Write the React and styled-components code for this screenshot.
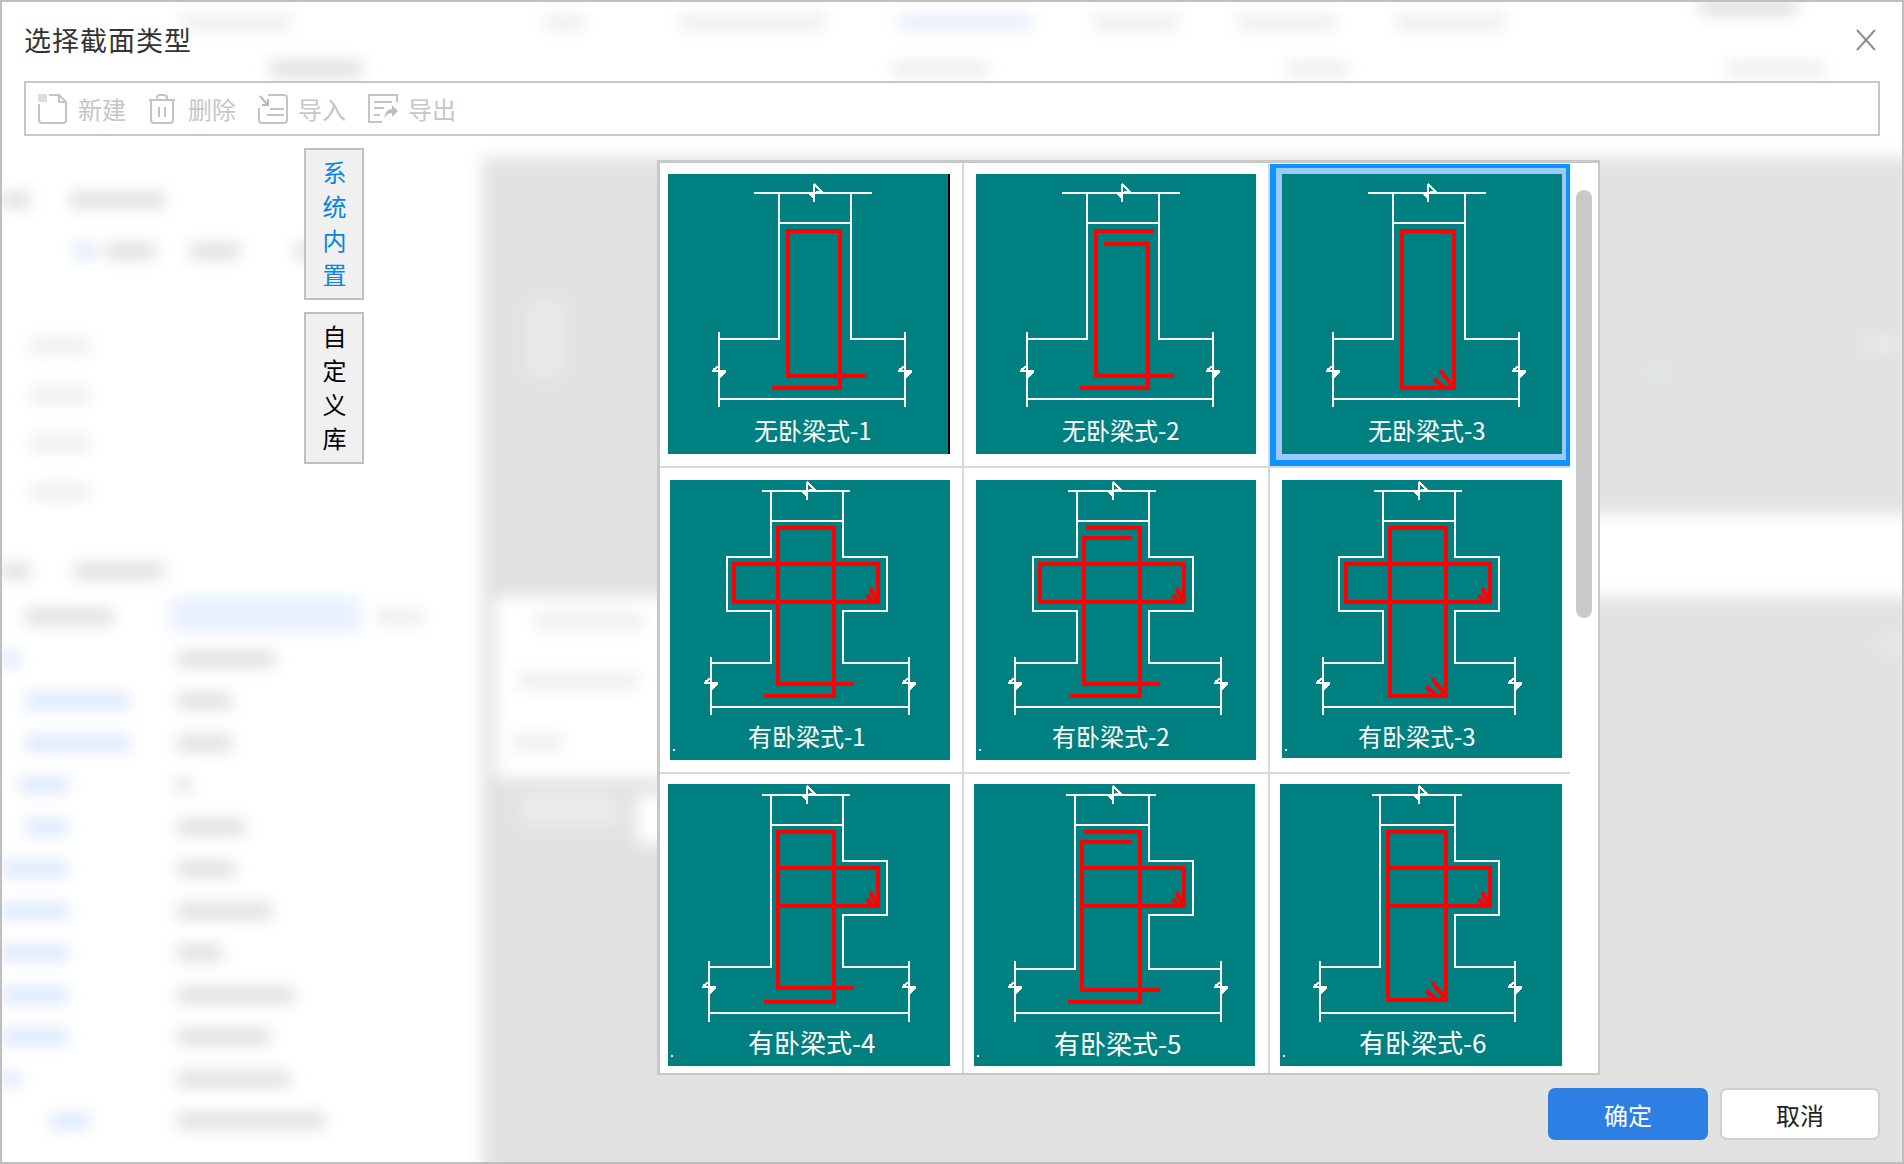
import React from "react";
import styled, { createGlobalStyle } from "styled-components";

const GlobalStyle = createGlobalStyle`
  html, body {
    margin: 0;
    padding: 0;
    overflow: hidden;
    background: #fff;
    font-family: "Noto Sans CJK SC", "Liberation Sans", sans-serif;
  }
`;

const Screen = styled.div`
  position: relative;
  width: 1904px;
  height: 1164px;
  overflow: hidden;
`;

/* the page behind the dialog, out of focus */
const Backdrop = styled.div`
  position: absolute;
  top: 0;
  left: 0;
  width: 1944px;
  height: 1204px;
  background: #fff;
  filter: blur(8px);
  display: grid;
  grid-template-columns: 482px 1fr;
  grid-template-rows: 157px 1fr;
`;

const TopBand = styled.div`
  grid-column: 1 / 3;
  background: #fff;
`;

const LeftPane = styled.div`
  background: #fff;
`;

const GrayPane = styled.div`
  background: #e2e2e2;
`;

const BlurRow = styled.div`
  display: flex;
  align-items: flex-start;
  height: ${(p) => p.$h}px;
  padding-top: ${(p) => p.$pt || 0}px;
  box-sizing: border-box;
`;

const Smudge = styled.div`
  flex: none;
  width: ${(p) => p.$w}px;
  height: ${(p) => p.$bh || 14}px;
  margin-left: ${(p) => p.$ml || 0}px;
  margin-top: ${(p) => p.$mt || 0}px;
  background: ${(p) => p.$c || "#dcdcdc"};
`;

const WhiteBand = styled.div`
  flex: 1;
  height: 100%;
  margin-left: 700px;
  background: #fff;
`;

const BackCard = styled.div`
  width: 600px;
  height: 100%;
  margin-left: 13px;
  background: #fff;
  box-sizing: border-box;
  padding-top: 17px;
`;

const Dialog = styled.div`
  position: relative;
  box-sizing: border-box;
  width: 1904px;
  height: 1164px;
  border: 2px solid #bfbfbf;
  display: flex;
  flex-direction: column;
`;

const Header = styled.div`
  flex: none;
  height: 79px;
  box-sizing: border-box;
  padding: 0 26px 0 22px;
  display: flex;
  justify-content: space-between;
  align-items: center;
`;

const Title = styled.div`
  font-size: 27px;
  line-height: 36px;
  margin-top: -3px;
  color: #333;
  width: 170px;
  letter-spacing: 1px;
  white-space: nowrap;
`;

const CloseIcon = styled.svg`
  display: block;
  width: 20px;
  height: 22px;
  margin-top: -3px;
`;

const Toolbar = styled.div`
  flex: none;
  height: 55px;
  width: 1856px;
  margin-left: 22px;
  box-sizing: border-box;
  border: 2px solid #c5c7cb;
  background: #fff;
  padding-left: 12px;
  display: flex;
  align-items: center;
`;

const ToolButton = styled.div`
  width: 110px;
  display: flex;
  align-items: center;
  gap: 10px;
  font-size: 24px;
  line-height: 30px;
  color: #c6c6c6;
  white-space: nowrap;
`;

const ToolIcon = styled.svg`
  display: block;
  flex: none;
  width: 30px;
  height: 30px;
  fill: none;
  stroke: #c4c4c4;
  stroke-width: 2;
`;

const Body = styled.div`
  flex: none;
  height: 927px;
  margin-top: 12px;
  display: flex;
  align-items: flex-start;
`;

const TabColumn = styled.div`
  flex: none;
  margin-left: 302px;
  display: flex;
  flex-direction: column;
  gap: 12px;
`;

const Tab = styled.div`
  width: 60px;
  height: 152px;
  box-sizing: border-box;
  border: 2px solid #c0c0c0;
  background: #f0f0f0;
  padding-top: 11px;
  display: flex;
  align-items: center;
  writing-mode: vertical-rl;
  text-orientation: upright;
  font-size: 24px;
  line-height: 24px;
  letter-spacing: 10px;
  color: ${(p) => (p.$active ? "#0a84e0" : "#000")};
`;

const Panel = styled.div`
  flex: none;
  width: 943px;
  height: 915px;
  margin: 12px 0 0 293px;
  box-sizing: border-box;
  border: 3px solid #c8c8c8;
  border-right-width: 2px;
  border-bottom-width: 2px;
  background: #fff;
  display: flex;
  overflow: hidden;
`;

const Grid = styled.div`
  flex: none;
  display: grid;
  grid-template-columns: 304px 306px 300px;
  grid-template-rows: 305px 306px 299px;
`;

const Cell = styled.div`
  box-sizing: border-box;
  padding: ${(p) => p.$pt}px 0 0 ${(p) => p.$pl}px;
  border-right: ${(p) => (p.$col < 2 ? "2px solid #d8d8d8" : "none")};
  border-bottom: ${(p) => (p.$row < 2 ? "2px solid #d8d8d8" : "none")};
`;

const SelectOuter = styled.div`
  box-sizing: border-box;
  height: 302px;
  margin-top: 1px;
  border-style: solid;
  border-color: #0a94ff;
  border-width: 4px 4px 6px 6px;
`;

const SelectInner = styled.div`
  box-sizing: border-box;
  height: 100%;
  border-style: solid;
  border-color: #9cc8fa;
  border-width: 6px 4px 6px 6px;
`;

const Tile = styled.div`
  width: ${(p) => p.$w}px;
  height: ${(p) => p.$h}px;
  background: #008080;
  border-right: ${(p) => (p.$stripe ? "2px solid #000" : "none")};
`;

const Drawing = styled.svg`
  display: block;
  width: 100%;
  height: 100%;
  shape-rendering: crispEdges;
`;

const Label = styled.text`
  fill: #fff;
  font-family: "Noto Sans CJK SC", sans-serif;
  font-size: ${(p) => p.$size}px;
`;

const Scrollbar = styled.div`
  flex: none;
  width: 16px;
  height: 428px;
  margin: 27px 0 0 6px;
  border-radius: 8px;
  background: #c9c9c9;
`;

const Footer = styled.div`
  flex: none;
  margin-top: 13px;
  padding-right: 22px;
  display: flex;
  justify-content: flex-end;
  gap: 12px;
`;

const Button = styled.div`
  width: 160px;
  height: 52px;
  box-sizing: border-box;
  border-radius: 7px;
  border: ${(p) => (p.$primary ? "none" : "2px solid #cfcfcf")};
  background: ${(p) => (p.$primary ? "#2d7fe3" : "#fff")};
  color: ${(p) => (p.$primary ? "#fff" : "#222")};
  font-size: 24px;
  display: flex;
  align-items: center;
  justify-content: center;
`;

// ---- beam section drawings ----

const sectionPath = (s) => {
  const [wl, wr] = s.web;
  const [fl, fr] = s.fl;
  const leftSide = s.arm && s.arm.l ? `V${s.arm.t}H${s.arm.l}V${s.arm.b}H${wl}` : "";
  const rightSide = s.arm && s.arm.r ? `V${s.arm.t}H${s.arm.r}V${s.arm.b}H${wr}` : "";
  return [
    `M${s.dim[0]} ${s.top}H${s.dim[1]}`,
    `M${wl} ${s.inner}H${wr}`,
    `M${wl} ${s.top}${leftSide}V${s.flange}H${fl}`,
    `M${wr} ${s.top}${rightSide}V${s.flange}H${fr}`,
    `M${fl} ${s.v[0]}V${s.v[1]}`,
    `M${fr} ${s.v[0]}V${s.v[1]}`,
    `M${fl} ${s.bot}H${fr}`,
  ].join("");
};

// dimension break marks: a hollow flag and a solid wedge on the line
const topTick = (x, y) =>
  `M${x} ${y}V${y + 18}M${x} ${y}L${x + 7} ${y + 7}L${x} ${y + 9}`;
const topWedge = (x, y) => `M${x - 6} ${y + 10}H${x}V${y + 16}Z`;

const sideTick = (x, y) => `M${x - 7} ${y}H${x + 7}M${x - 6} ${y - 1}L${x} ${y - 5}`;
const sideWedge = (x, y) => `M${x} ${y + 1}H${x + 7}L${x + 1} ${y + 7}Z`;

const lapPath = (r) =>
  `M${r.leftEnd} ${r.leftTop}H${r.l}V${r.mid}H${r.midEnd}M${r.rightStart} ${r.rightTop}H${r.r}V${r.low}H${r.lowEnd}`;

const hookPath = (r) =>
  `M${r.l} ${r.top}H${r.r}V${r.low}H${r.l}Z` +
  `M${r.r - 14} ${r.low - 18}L${r.r} ${r.low}M${r.r - 20} ${r.low - 9}L${r.r - 9} ${r.low}`;

const crossPath = (c) =>
  `M${c.l} ${c.t}H${c.r}V${c.b}H${c.l}${c.closed ? "Z" : ""}` +
  `M${c.r - 8} ${c.b - 14}L${c.r} ${c.b}M${c.r - 11} ${c.b - 7}L${c.r - 5} ${c.b}`;

const lap = (l, r, top, mid, low, midEnd, lowEnd, over = {}) => ({
  l, r, mid, low, midEnd, lowEnd,
  leftTop: top, rightTop: top, leftEnd: r, rightStart: l,
  ...over,
});

const plain = {
  top: 19, inner: 49, web: [111, 183], dim: [86, 204], flange: 165,
  fl: [51, 237], v: [158, 233], bot: 225, tickX: 146, tickY: 197,
};
const both = {
  top: 11, inner: 41, web: [101, 173], dim: [92, 180], flange: 183,
  fl: [41, 239], v: [177, 235], bot: 227, tickX: 137, tickY: 203,
  arm: { t: 77, b: 131, l: 57, r: 217 },
};
const oneSide = {
  top: 11, inner: 41, web: [103, 175], dim: [94, 182], flange: 183,
  fl: [41, 241], v: [177, 238], bot: 229, tickX: 139, tickY: 203,
  arm: { t: 77, b: 131, r: 219 },
};

const cells = [
  {
    name: "无卧梁式-1", row: 0, col: 0, pt: 11, pl: 8, w: 280, h: 280, stripe: true,
    section: plain, lx: 86, ly: 266, ls: 24,
    rebar: lap(120, 172, 57, 202, 214, 198, 104),
  },
  {
    name: "无卧梁式-2", row: 0, col: 1, pt: 11, pl: 12, w: 280, h: 280,
    section: plain, lx: 86, ly: 266, ls: 24,
    rebar: lap(120, 172, 57, 202, 214, 198, 104, { leftEnd: 178, rightTop: 70, rightStart: 128 }),
  },
  {
    name: "无卧梁式-3", row: 0, col: 2, w: 280, h: 280, selected: true,
    section: plain, lx: 86, ly: 266, ls: 24,
    hook: { l: 120, r: 172, top: 57, low: 214 },
  },
  {
    name: "有卧梁式-1", row: 1, col: 0, pt: 12, pl: 10, w: 280, h: 280, dot: 269,
    section: both, lx: 78, ly: 266, ls: 24,
    rebar: lap(108, 164, 48, 204, 216, 184, 94),
    cross: { l: 64, r: 208, t: 84, b: 122, closed: true },
  },
  {
    name: "有卧梁式-2", row: 1, col: 1, pt: 12, pl: 12, w: 280, h: 280, dot: 269,
    section: { ...both, fl: [39, 245] }, lx: 76, ly: 266, ls: 24,
    rebar: lap(108, 164, 48, 204, 216, 184, 94, { leftTop: 58, leftEnd: 156, rightStart: 110 }),
    cross: { l: 64, r: 208, t: 84, b: 122, closed: true },
  },
  {
    name: "有卧梁式-3", row: 1, col: 2, pt: 12, pl: 12, w: 280, h: 278, dot: 269,
    section: { ...both, fl: [41, 233] }, lx: 76, ly: 266, ls: 24,
    hook: { l: 108, r: 164, top: 48, low: 216 },
    cross: { l: 64, r: 208, t: 84, b: 122, closed: true },
  },
  {
    name: "有卧梁式-4", row: 2, col: 0, pt: 10, pl: 8, w: 282, h: 282, dot: 271,
    section: oneSide, lx: 80, ly: 269, ls: 26,
    rebar: lap(110, 166, 48, 204, 218, 186, 96),
    cross: { l: 110, r: 210, t: 84, b: 122 },
  },
  {
    name: "有卧梁式-5", row: 2, col: 1, pt: 10, pl: 10, w: 281, h: 282, dot: 271,
    section: { ...oneSide, web: [101, 175], dim: [92, 182], fl: [41, 247], flange: 185 },
    lx: 80, ly: 270, ls: 26,
    rebar: lap(108, 166, 48, 206, 218, 186, 94, { leftTop: 58, leftEnd: 158, rightStart: 110 }),
    cross: { l: 108, r: 210, t: 84, b: 122 },
  },
  {
    name: "有卧梁式-6", row: 2, col: 2, pt: 10, pl: 10, w: 282, h: 282, dot: 271,
    section: { ...oneSide, web: [100, 175], dim: [92, 182], fl: [40, 235] },
    lx: 79, ly: 269, ls: 26,
    hook: { l: 108, r: 166, top: 48, low: 216 },
    cross: { l: 108, r: 210, t: 84, b: 122 },
  },
];

const SectionDrawing = ({ cell }) => {
  const s = cell.section;
  const y0 = s.top - 9;
  const white =
    sectionPath(s) +
    topTick(s.tickX, y0) +
    sideTick(s.fl[0], s.tickY) +
    sideTick(s.fl[1], s.tickY);
  const wedges =
    topWedge(s.tickX, y0) + sideWedge(s.fl[0], s.tickY) + sideWedge(s.fl[1], s.tickY);
  let red = "";
  if (cell.rebar) red += lapPath(cell.rebar);
  if (cell.hook) red += hookPath(cell.hook);
  if (cell.cross) red += crossPath(cell.cross);
  return (
    <Drawing viewBox={`0 0 ${cell.w} ${cell.h}`}>
      <path d={white} fill="none" stroke="#fff" strokeWidth="2" />
      <path d={wedges} fill="#fff" />
      <path d={red} fill="none" stroke="#f00" strokeWidth="4" />
      {cell.dot && <rect x="3" y={cell.dot} width="2" height="2" fill="#fff" />}
      <Label x={cell.lx} y={cell.ly} $size={cell.ls}>{cell.name}</Label>
    </Drawing>
  );
};

const SectionCell = ({ cell }) => {
  const tile = (
    <Tile $w={cell.w} $h={cell.h} $stripe={cell.stripe}>
      <SectionDrawing cell={cell} />
    </Tile>
  );
  if (cell.selected) {
    return (
      <Cell $row={cell.row} $col={cell.col} $pt={0} $pl={0}>
        <SelectOuter>
          <SelectInner>{tile}</SelectInner>
        </SelectOuter>
      </Cell>
    );
  }
  return (
    <Cell $row={cell.row} $col={cell.col} $pt={cell.pt} $pl={cell.pl}>
      {tile}
    </Cell>
  );
};

// ---- blurred page behind ----

const B = "#d5e4fa";
const G = "#dadada";
const L = "#ebebeb";

const topRows = [
  [
    50,
    [
      [182, 109, L, 15], [255, 37, L, 15], [97, 145, L, 15], [73, 134, "#e2ecfb", 15],
      [61, 85, L, 15], [60, 97, L, 15], [61, 109, L, 15], [195, 97, G, 0],
    ],
  ],
  [50, [[270, 92, G, 12], [530, 96, L, 12], [300, 60, L, 12], [380, 95, L, 12]]],
];

const leftRows = [
  [36, []],
  [51, [[0, 30, G], [40, 95, G]]],
  [95, [[75, 20, B], [10, 50, G], [35, 50, G], [55, 50, G]]],
  [49, [[30, 60, L]]],
  [48, [[30, 60, L]]],
  [49, [[30, 60, L]]],
  [79, [[30, 60, L]]],
  [46, [[0, 30, G], [44, 90, G]]],
  [42, [[25, 88, G], [57, 190, "#e8f1fd", -14, 36], [16, 47, L]]],
];

const tableRows = [
  [20, 0, 98], [105, 25, 55], [105, 25, 55], [48, 20, 13], [43, 25, 68], [68, 0, 58],
  [68, 0, 95], [68, 0, 45], [68, 0, 118], [68, 0, 93], [20, 0, 113], [40, 50, 148],
];

const PageBehind = () => (
  <Backdrop>
    <TopBand>
      {topRows.map(([h, bars], i) => (
        <BlurRow $h={h} key={i}>
          {bars.map(([ml, w, c, mt], j) => (
            <Smudge key={j} $ml={ml} $w={w} $c={c} $mt={mt} />
          ))}
        </BlurRow>
      ))}
    </TopBand>
    <LeftPane>
      {leftRows.map(([h, bars], i) => (
        <BlurRow $h={h} key={i}>
          {bars.map(([ml, w, c, mt, bh], j) => (
            <Smudge key={j} $ml={ml} $w={w} $c={c} $mt={mt} $bh={bh} />
          ))}
        </BlurRow>
      ))}
      {tableRows.map(([w, ml, val], i) => (
        <BlurRow $h={42} key={i}>
          <Smudge $ml={ml} $w={w} $c={B} />
          <Smudge $ml={177 - ml - w} $w={val} $c={G} />
        </BlurRow>
      ))}
    </LeftPane>
    <GrayPane>
      <BlurRow $h={357}>
        <Smudge $ml={44} $mt={143} $w={38} $bh={77} $c="#e9e9e9" />
        <Smudge $ml={1080} $mt={200} $w={30} $bh={30} $c="#e0e5e1" />
        <Smudge $ml={190} $mt={180} $w={40} $c="#ebebeb" />
      </BlurRow>
      <BlurRow $h={83}>
        <WhiteBand />
      </BlurRow>
      <BlurRow $h={181}>
        <BackCard>
          <Smudge $ml={39} $w={110} $c={L} />
          <Smudge $ml={23} $mt={46} $w={120} $c={L} />
          <Smudge $ml={18} $mt={47} $w={50} $c={L} />
        </BackCard>
        <Smudge $ml={785} $mt={40} $w={60} $c="#ebebeb" />
      </BlurRow>
      <BlurRow $h={500} $pt={17}>
        <Smudge $ml={38} $w={100} $bh={30} $c="#ebebeb" />
        <Smudge $ml={17} $w={40} $bh={48} $c="#fff" />
      </BlurRow>
    </GrayPane>
  </Backdrop>
);

export default function App() {
  return (
    <Screen>
      <GlobalStyle />
      <PageBehind />
      <Dialog>
        <Header>
          <Title>选择截面类型</Title>
          <CloseIcon viewBox="0 0 20 22">
            <path d="M1 1L19 21M19 1L1 21" fill="none" stroke="#8e8e8e" strokeWidth="2" />
          </CloseIcon>
        </Header>
        <Toolbar>
          <ToolButton>
            <ToolIcon viewBox="0 0 30 30">
              <rect x="0" y="0" width="9" height="8" fill="#dcdcdc" stroke="none" />
              <path d="M1 10V26Q1 29 4 29H25Q28 29 28 26V8L21 1H11M21 1V8H28" />
            </ToolIcon>
            新建
          </ToolButton>
          <ToolButton>
            <ToolIcon viewBox="0 0 30 30">
              <path d="M1 6H27M9 6V4Q9 1 12 1H16Q19 1 19 4V6M3 6V26Q3 29 6 29H22Q25 29 25 26V6M11 13V23M17 13V23" />
            </ToolIcon>
            删除
          </ToolButton>
          <ToolButton>
            <ToolIcon viewBox="0 0 30 30">
              <path d="M10 1H26Q29 1 29 4V26Q29 29 26 29H4Q1 29 1 26V14M12 15H26M9 21H26" />
              <path d="M2 2L9 10M4 11H10V5" stroke="#b8b8b8" />
            </ToolIcon>
            导入
          </ToolButton>
          <ToolButton>
            <ToolIcon viewBox="0 0 30 30">
              <path d="M29 8V1H1V28H14M6 8H24M6 14H16M6 21H12" />
              <path d="M16 24Q18 15 24 15V11L30 17L24 23V19Q20 19 16 24Z" fill="#bdbdbd" stroke="none" />
            </ToolIcon>
            导出
          </ToolButton>
        </Toolbar>
        <Body>
          <TabColumn>
            <Tab $active>系统内置</Tab>
            <Tab>自定义库</Tab>
          </TabColumn>
          <Panel>
            <Grid>
              {cells.map((cell) => (
                <SectionCell cell={cell} key={cell.name} />
              ))}
            </Grid>
            <Scrollbar />
          </Panel>
        </Body>
        <Footer>
          <Button $primary>确定</Button>
          <Button>取消</Button>
        </Footer>
      </Dialog>
    </Screen>
  );
}
